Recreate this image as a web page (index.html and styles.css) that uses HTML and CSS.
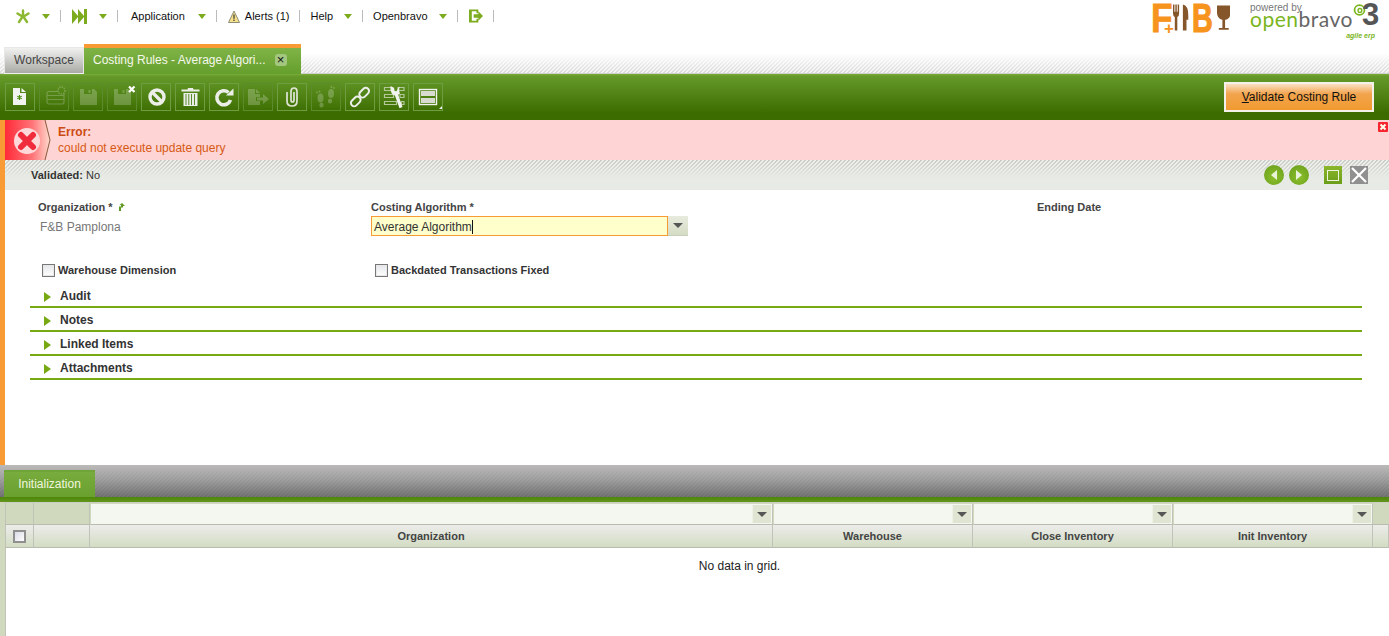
FILE: index.html
```html
<!DOCTYPE html>
<html lang="en">
<head>
<meta charset="utf-8">
<title>Costing Rules</title>
<link rel="stylesheet" href="styles.css">
</head>
<body>
<div class="app">
  <header class="topbar">
    <nav class="nav">
      <div class="nav-group">
        <svg class="ico-star" width="14" height="15" viewBox="0 0 14 15"><g stroke="#8cb832" stroke-width="2.400" stroke-linecap="round"><path d="M7 1.500v5M1.500 4.500l4 2.500M12.500 4.500l-4 2.500M3 13l3-4.500M11 13l-3-4.500"/></g></svg>
        <i class="arrow"></i>
      </div>
      <span class="sep"></span>
      <div class="nav-group nav-ff">
        <svg width="15" height="15" viewBox="0 0 15 15"><path fill="#7cab1e" d="M0 0l6 7V0l6 7V0h3v15h-3V8l-6 7V8l-6 7z"/></svg>
        <i class="arrow"></i>
      </div>
      <span class="sep"></span>
      <div class="nav-group nav-app"><span>Application</span><i class="arrow"></i></div>
      <span class="sep"></span>
      <div class="nav-group nav-alert">
        <svg width="12" height="13" viewBox="0 0 12 13"><path d="M6 1L11.500 12.500H.5z" fill="#f7e08a" stroke="#8d8d78"/><path d="M6 4.500v4.200M6 9.600V11" stroke="#333" stroke-width="1.200"/></svg>
        <span>Alerts (1)</span>
      </div>
      <span class="sep"></span>
      <div class="nav-group nav-text"><span>Help</span><i class="arrow"></i></div>
      <span class="sep"></span>
      <div class="nav-group nav-text"><span>Openbravo</span><i class="arrow"></i></div>
      <span class="sep"></span>
      <div class="nav-group nav-exit">
        <svg width="14" height="14" viewBox="0 0 15 14"><path fill="#7cab1e" d="M0 0h10v4H8V2H3v10h5v-2h2v4H0z"/><path fill="#7cab1e" d="M5 5h5V2l5 5-5 5V9H5z"/></svg>
      </div>
      <span class="sep"></span>
    </nav>
    <div class="brand">
      <div class="fb">
        <span class="fb-f">F</span><span class="fb-plus">+</span>
        <svg class="fb-cutlery" width="18" height="29" viewBox="0 0 18 29"><path fill="#86562b" d="M0 0h1.600v8h1V0h1.600v8h1V0h1.600v10q0 3-2 4v15H2V14q-2-1-2-4zM11 0q6 1 6 12v5h-2v12h-4z"/></svg>
        <span class="fb-b">B</span>
        <svg class="fb-glass" width="15" height="30" viewBox="0 0 15 30"><path fill="#86562b" d="M0 1h15v8q0 7-6 8v9h4v2H2v-2h4v-9q-6-1-6-8z"/></svg>
      </div>
      <div class="ob">
        <span class="ob-powered">powered by</span>
        <span class="ob-word"><b>open</b>bravo</span>
        <svg class="ob-spiral" width="13" height="12" viewBox="0 0 14 14"><circle cx="7" cy="7" r="5.800" fill="none" stroke="#7ab51d" stroke-width="2"/><circle cx="7.500" cy="7.500" r="2.200" fill="none" stroke="#7ab51d" stroke-width="1.600"/></svg>
        <span class="ob-three">3</span>
        <span class="ob-agile">agile erp</span>
      </div>
    </div>
  </header>

  <div class="tabs">
    <div class="tab tab-idle">Workspace</div>
    <div class="tab tab-active">
      <span>Costing Rules - Average Algori...</span>
      <span class="tab-close">×</span>
    </div>
  </div>

  <div class="toolbar">
    <div class="tool">
      <svg viewBox="0 0 28 26"><path fill="#f1f3ee" d="M7 4h7v5h6v12H7z"/><path fill="#f1f3ee" d="M15.500 4l4.500 4h-4.500z"/><path stroke="#4c8a10" stroke-width="1.100" d="M13.500 11v5M11.300 12.200l4.400 2.600M15.700 12.200l-4.400 2.600"/></svg>
    </div>
    <div class="tool tool-off">
      <svg viewBox="0 0 28 26"><g fill="none" stroke="#fff" stroke-width="1.200"><rect x="7" y="7.500" width="17" height="12.500" rx="2"/><path d="M7 11.500h17M7 15.500h17"/></g><circle cx="21.500" cy="6.500" r="3.500" fill="#4f8412" stroke="#fff" stroke-width="1.500" stroke-dasharray="1.500 .8"/></svg>
    </div>
    <div class="tool tool-off">
      <svg viewBox="0 0 28 26"><path fill="#fff" fill-rule="evenodd" d="M6 5h14l3 3v13H6zM10 5v5h8V5zM14.500 6v3h2V6z"/></svg>
    </div>
    <div class="tool tool-mixed">
      <svg viewBox="0 0 28 26"><path class="dim" fill="#fff" fill-rule="evenodd" d="M6 5h14l3 3v13H6zM10 5v5h8V5zM14.500 6v3h2V6z"/><path stroke="#fff" stroke-width="2.200" d="M21 2.500l5.500 5.500M26.500 2.500L21 8"/></svg>
    </div>
    <div class="tool">
      <svg viewBox="0 0 28 26"><circle cx="15" cy="13" r="7" fill="none" stroke="#eceee8" stroke-width="3.400"/><path stroke="#eceee8" stroke-width="3.400" d="M10 8l10 10"/></svg>
    </div>
    <div class="tool">
      <svg viewBox="0 0 28 26"><path fill="#eceee8" d="M5.500 5.500h6l.5-1.500h5l.5 1.500h6v2h-18zM7.500 9h14v13h-14z"/><path stroke="#5b8b2c" stroke-width="1" d="M10 10v11M12.800 10v11M15.500 10v11M18.500 10v11"/></svg>
    </div>
    <div class="tool">
      <svg viewBox="0 0 28 26"><path fill="none" stroke="#eceee8" stroke-width="3.600" d="M20.500 16A7 7 0 1 1 18.500 8.500"/><path fill="#eceee8" d="M16 11.500h7.500v-7z"/></svg>
    </div>
    <div class="tool tool-off">
      <svg viewBox="0 0 28 26"><path fill="#fff" d="M4 5h7v5h5v3h-4v4h4v4H4zM12 5l4 4h-4z"/><path fill="#fff" d="M13 13.500h6V10l6 5-6 5v-3.500h-6z"/></svg>
    </div>
    <div class="tool">
      <svg viewBox="0 0 28 26"><path fill="none" stroke="#dfe5d6" stroke-width="1.700" d="M9 8v9q0 5 5 5t5-5V7.500Q19 4 16 4t-3 3.500V16q0 2 1.500 2t1.500-2V8"/></svg>
    </div>
    <div class="tool tool-off">
      <svg viewBox="0 0 28 26"><g fill="#fff"><ellipse cx="8.500" cy="14" rx="3" ry="4.500"/><ellipse cx="9.500" cy="21" rx="2.200" ry="2.500"/><ellipse cx="19" cy="9.500" rx="3" ry="4.500"/><ellipse cx="18" cy="17" rx="2.200" ry="2.500"/><circle cx="5" cy="8.500" r=".9"/><circle cx="7.500" cy="7.500" r="1"/><circle cx="22" cy="4" r=".9"/><circle cx="19.500" cy="3" r="1"/></g></svg>
    </div>
    <div class="tool">
      <svg viewBox="0 0 28 26"><g fill="none" stroke="#eceee8" stroke-width="2"><rect x="15" y="3" width="6.500" height="11" rx="3.200" transform="rotate(45 18 8.500)"/><rect x="6.500" y="12" width="6.500" height="11" rx="3.200" transform="rotate(45 9.800 17.500)"/></g></svg>
    </div>
    <div class="tool">
      <svg viewBox="0 0 28 26"><g fill="none" stroke="#b3c799" stroke-width="1.200"><path d="M4.500 3.500h7v3h-7zM18 3.500h6v3h-6zM4.500 10.500h9v3h-9zM20 10.500h4v3h-4zM4.500 17.500h12v3h-12zM21.500 17.500h2.500v3h-2.500z"/></g><path fill="#f1f3ee" d="M10.500 2l3.500 1.800.5 3 1.700.4 1-1 1.300-3 1-.5-.4 4 .9 2.800-1.800 1.200L22.500 23l-3 1.300-4.600-12.800-2.900-1.500L10.500 6z"/></svg>
    </div>
    <div class="tool tool-menu">
      <svg viewBox="0 0 28 26"><rect x="5.500" y="5.500" width="17" height="15" fill="none" stroke="#f1f3ee" stroke-width="1.400"/><path fill="#d8dcd0" d="M7 7h14v5H7zM7 14h14v5H7z"/><path fill="#eee" d="M25 25h3v-3z"/></svg>
    </div>
    <button class="validate" type="button"><u>V</u>alidate Costing Rule</button>
  </div>

  <div class="main">
    <div class="message">
      <svg class="msg-icon" width="46" height="40" viewBox="0 0 46 40">
        <defs><linearGradient id="msgRed"><stop offset="0" stop-color="#ff2a38"/><stop offset=".6" stop-color="#ff7478"/><stop offset="1" stop-color="#ffdcd0"/></linearGradient></defs>
        <path fill="url(#msgRed)" d="M0 0h41l4.500 20L41 40H0z"/>
        <path fill="none" stroke="#8a5a40" d="M40 0l5 20-5 20"/>
        <circle cx="22" cy="21" r="13" fill="#ffd9d9"/>
        <path stroke="#f02b3c" stroke-width="6" stroke-linecap="round" d="M16 15l12 12M28 15L16 27"/>
      </svg>
      <div class="msg-text">
        <strong>Error:</strong>
        <span>could not execute update query</span>
      </div>
      <svg class="msg-close" width="10" height="10" viewBox="0 0 10 10"><rect width="10" height="10" rx="1" fill="#f5242f"/><path stroke="#ffe" stroke-width="2" d="M2.500 2.500l5 5M7.500 2.500l-5 5"/></svg>
    </div>
    <div class="status">
      <span class="status-text"><b>Validated:</b> No</span>
      <div class="status-actions">
        <span class="round"><i class="tri-left"></i></span>
        <span class="round"><i class="tri-right"></i></span>
        <span class="square-green"><i></i></span>
        <span class="square-grey"><svg width="18" height="18" viewBox="0 0 18 18"><path stroke="#fff" stroke-width="2.200" d="M2 2l14 14M16 2L2 16"/></svg></span>
      </div>
    </div>
    <form class="form">
      <div class="field">
        <label class="flabel">Organization * <svg width="7" height="8" viewBox="0 0 7 8"><path fill="#5d9a1f" d="M1 8V3.500h2V2L1.500 2 4 0l3 3H5v1.500H3V8z"/></svg></label>
        <div class="fvalue">F&amp;B Pamplona</div>
      </div>
      <div class="field">
        <label class="flabel">Costing Algorithm *</label>
        <div class="combo">
          <div class="combo-input">Average Algorithm<i class="caret"></i></div>
          <div class="combo-btn"><i class="down"></i></div>
        </div>
      </div>
      <div class="field">
        <label class="flabel">Ending Date</label>
      </div>
      <div class="check-row">
        <label class="check"><i class="box"></i>Warehouse Dimension</label>
        <label class="check"><i class="box"></i>Backdated Transactions Fixed</label>
      </div>
    </form>
    <div class="sections">
      <div class="section"><i class="sec-tri"></i>Audit</div>
      <div class="section"><i class="sec-tri"></i>Notes</div>
      <div class="section"><i class="sec-tri"></i>Linked Items</div>
      <div class="section"><i class="sec-tri"></i>Attachments</div>
    </div>
  </div>

  <div class="subtabs"><div class="subtab">Initialization</div></div>
  <div class="subline"></div>

  <div class="grid-wrap">
    <div class="grid">
      <div class="fcell fcell-first"></div>
      <div class="fcell"></div>
      <div class="fcell filter"><span class="fbtn"><i class="down"></i></span></div>
      <div class="fcell filter"><span class="fbtn"><i class="down"></i></span></div>
      <div class="fcell filter"><span class="fbtn"><i class="down"></i></span></div>
      <div class="fcell filter"><span class="fbtn"><i class="down"></i></span></div>
      <div class="fcell fcell-last"></div>
      <div class="hcell hcell-first"><i class="hbox"></i></div>
      <div class="hcell"></div>
      <div class="hcell">Organization</div>
      <div class="hcell">Warehouse</div>
      <div class="hcell">Close Inventory</div>
      <div class="hcell">Init Inventory</div>
      <div class="hcell"></div>
    </div>
    <div class="grid-empty">No data in grid.</div>
  </div>
</div>
</body>
</html>
```
FILE: styles.css
```css
* { box-sizing: border-box; }
html, body { margin: 0; padding: 0; }
body { font-family: "Liberation Sans", Arial, sans-serif; font-size: 11px; color: #222; background: #fff; }
.app { width: 1389px; height: 636px; overflow: hidden; display: flex; flex-direction: column; }

/* top navigation */
.topbar { height: 44px; display: flex; justify-content: space-between; flex: none; }
.nav { display: flex; align-items: center; height: 32px; padding-left: 16px; font-size: 11px; color: #111; }
.nav-group { display: flex; align-items: center; gap: 12px; }
.nav-ff { padding-left: 1px; }
.nav-app { padding-left: 3px; gap: 13px; }
.nav-alert { gap: 5px; padding-left: 1px; }
.nav-text { gap: 11px; }
.nav-exit { padding-left: 1px; }
.sep { width: 1px; height: 12px; background: #bbb; margin: 0 10px; }
.arrow { width: 0; height: 0; border-left: 4px solid transparent; border-right: 4px solid transparent; border-top: 5px solid #7cab1e; }

.brand { display: flex; padding: 0 9px 0 0; gap: 20px; }
.fb { display: flex; align-items: flex-start; width: 79px; height: 36px; position: relative; font-weight: 700; color: #f7941d; font-size: 40px; line-height: 46px; }
.fb-f { margin: -5px -2px 0 0; transform: scaleX(.88); transform-origin: left; -webkit-text-stroke: .8px #f7941d; }
.fb-plus { position: absolute; left: 13px; top: 19px; font-size: 17px; line-height: 20px; }
.fb-cutlery { margin-top: 3px; }
.fb-b { margin: -5px -7px 0 2px; transform: scaleX(.72); transform-origin: left; -webkit-text-stroke: 1.200px #f7941d; }
.fb-glass { margin-top: 3px; margin-left: 3px; }

.ob { display: grid; grid-template-columns: 103px 27px; grid-template-rows: 13px 18px 10px; width: 130px; }
.ob-powered { grid-column: 1; grid-row: 1; padding-top: 3px; font-size: 10px; line-height: 10px; color: #777; }
.ob-word { grid-column: 1; grid-row: 2; font-family: "Lato", sans-serif; font-size: 21px; line-height: 12px; color: #666; letter-spacing: .5px; white-space: nowrap; }
.ob-word b { font-weight: 400; color: #7ab51d; }
.ob-spiral { grid-column: 2; grid-row: 1 / 3; margin-top: 4px; }
.ob-three { grid-column: 2; grid-row: 1 / 3; margin: -3px 0 0 9px; font-size: 31px; line-height: 36px; font-weight: 700; color: #555; }
.ob-agile { grid-column: 1 / 3; grid-row: 3; justify-self: end; margin-right: 5px; font-size: 7px; line-height: 10px; font-style: italic; font-weight: 700; color: #7ab51d; }

/* window tabs */
.tabs { height: 30px; flex: none; display: flex; align-items: flex-end; padding-left: 4px; font-size: 12px;
  background: linear-gradient(#fff 30%, rgba(255,255,255,.15) 96%, #cfd0cc 96%), repeating-linear-gradient(135deg, #d4d4d4 0 1.414px, #f2f2f2 1.414px 2.828px); }
.tab { display: flex; align-items: center; height: 27px; }
.tab-idle { width: 80px; padding-bottom: 2px; justify-content: center; color: #444; background: linear-gradient(#f1f1ef, #a9aaa6); border: 1px solid #e8e8e6; border-bottom-color: #eee; }
.tab-active { width: 217px; height: 30px; padding: 0 0 2px 9px; gap: 9px; color: #f5f8ec; background: linear-gradient(#80b347, #659f2c); border-top: 4px solid #f99b34; }
.tab-close { width: 12px; height: 12px; border-radius: 3px; background: #a4c77f; color: #111; font-size: 13px; line-height: 11px; text-align: center; }

/* toolbar */
.toolbar { height: 46px; flex: none; display: flex; align-items: flex-start; gap: 4px; padding: 9px 15px 0 5px; background: linear-gradient(#7bad3b 0, #659a2a 2px, #3c6c00 85%, #3c6b00); }
.tool { width: 30px; height: 28px; flex: none; border: 1px solid #6f9e42; }
.tool svg { display: block; width: 28px; height: 26px; }
.tool-off { border-color: #5b8c2c; }
.tool-off svg { opacity: .22; }
.tool-mixed { border-color: #5b8c2c; }
.tool-mixed .dim { opacity: .22; }
.validate { margin: -1px 0 0 auto; width: 150px; height: 30px; padding: 0; font: 12px "Liberation Sans", Arial, sans-serif; color: #111; border: 2px solid #f3f1ea; background: linear-gradient(#fbe0c4 0, #f2a44d 38%, #f19a30 100%); }

/* main window */
.main { flex: none; height: 345px; border-left: 5px solid #f99b34; }
.message { height: 40px; display: flex; background: #ffd4d4; }
.msg-icon { flex: none; }
.msg-text { display: flex; flex-direction: column; padding: 4px 0 0 7px; font-size: 12px; line-height: 16px; color: #d65a15; }
.msg-text strong { color: #cc4b12; }
.msg-close { margin: 2px 1px 0 auto; }
.status { height: 30px; display: flex; align-items: center; justify-content: space-between; padding: 0 21px 0 26px; background: linear-gradient(rgba(232,235,229,0) 0, #e8ebe5 60%), repeating-linear-gradient(135deg, #c9cbc6 0 1.414px, #eff0ec 1.414px 2.828px); }
.status-text { color: #333; }
.status-text b { color: #333; }
.status-actions { display: flex; align-items: center; }
.round { width: 20px; height: 20px; border-radius: 50%; margin-left: 5px; display: flex; align-items: center; justify-content: center; background: radial-gradient(circle at 50% 60%, #8cc02c, #72a61f 70%, #c3d1a6 100%); }
.tri-left, .tri-right { width: 0; height: 0; border-top: 5px solid transparent; border-bottom: 5px solid transparent; }
.tri-left { border-right: 6px solid #e9f3d7; }
.tri-right { border-left: 6px solid #e9f3d7; }
.square-green { width: 18px; height: 18px; margin-left: 15px; display: flex; align-items: center; justify-content: center; background: linear-gradient(#8bb62d, #6b9d19); }
.square-green i { width: 12px; height: 11px; border: 1px solid #eef5dc; }
.square-grey { width: 18px; height: 18px; margin-left: 8px; background: #909090; }
.square-grey svg { display: block; }

.form { display: grid; grid-template-columns: 333px 666px 1fr; padding: 11px 0 0 33px; height: 94px; align-content: start; }
.field { height: 46px; }
.flabel { display: block; height: 15px; font-weight: 700; color: #444; line-height: 13px; }
.flabel svg { margin-left: 2px; }
.fvalue { padding: 3px 0 0 2px; font-size: 12px; color: #777; line-height: 16px; }
.combo { display: flex; width: 317px; height: 20px; }
.combo-input { width: 297px; border: 1px solid #f99b34; background: #ffc; padding-left: 2px; font-size: 12px; line-height: 20px; color: #333; }
.caret { display: inline-block; width: 1px; height: 14px; background: #111; vertical-align: -3px; }
.combo-btn { width: 20px; display: flex; align-items: center; justify-content: center; background: linear-gradient(#e7ebde, #d5dcc4); border-bottom: 1px solid #c8cfb8; }
.down { width: 0; height: 0; border-left: 5px solid transparent; border-right: 5px solid transparent; border-top: 5px solid #555; }
.check-row { grid-column: 1 / 4; display: grid; grid-template-columns: 333px 1fr; padding-left: 4px; margin-top: 16px; }
.check { display: flex; align-items: center; gap: 3px; font-weight: 700; color: #333; height: 14px; }
.box { width: 13px; height: 13px; border: 1px solid #777; outline: 1px solid #e8e8e8; outline-offset: -2px; background: linear-gradient(#e4e6ea, #fff); }

.sections { padding: 0 27px 0 25px; }
.section { height: 24px; display: flex; align-items: center; padding: 2px 0 0 14px; font-size: 12px; font-weight: 700; color: #333; border-bottom: 2px solid #76a912; }
.sec-tri { width: 0; height: 0; margin-right: 9px; margin-top: 1px; border-top: 5px solid transparent; border-bottom: 5px solid transparent; border-left: 7px solid #76a912; }

/* sub tabs */
.subtabs { height: 32px; flex: none; padding: 5px 0 0 4px; background: linear-gradient(rgba(187,186,185,1) 0, rgba(160,160,160,.9) 45%, rgba(110,110,110,.9) 100%), repeating-linear-gradient(135deg, #666 0 1.414px, #aaa 1.414px 2.828px); }
.subtab { width: 91px; height: 27px; font-size: 12px; line-height: 24px; text-align: center; color: #f0f6de; background: linear-gradient(#78ac3e, #69a02e); border-top: 2px solid #6fa536; }
.subline { height: 5px; flex: none; background: linear-gradient(#4d8608, #62961c); }

/* grid */
.grid-wrap { flex: 1; border-top: 1px solid #c9cdc2; border-left: 5px solid #d0d9bd; box-shadow: inset 1px 0 #bfc3b8; }
.grid { display: grid; grid-template-columns: 29px 56px 683px 200px 200px 200px 16px; grid-template-rows: 22px 23px; width: 1384px; }
.fcell { background: #d0d9bd; border-right: 1px solid #bfc3b8; border-bottom: 1px solid #b8bbb0; }
.fcell-first, .hcell-first { border-left: 1px solid #bfc3b8; }
.fcell-last { border-right: 0; }
.filter { background: #f4f7ef; border: 1px solid #d0d9bd; border-bottom: 1px solid #b8bbb0; border-right-color: #bfc3b8; display: flex; justify-content: flex-end; align-items: center; padding-right: 1px; }
.fbtn { width: 19px; height: 18px; display: flex; align-items: center; justify-content: center; background: #dfe4d3; border-left: 1px solid #eef1e6; }
.hcell { display: flex; align-items: center; justify-content: center; font-weight: 700; color: #444; background: linear-gradient(#ececea, #d3dcc3); border-right: 1px solid #bfc3b8; border-bottom: 1px solid #b8bbb0; }
.hbox { width: 13px; height: 13px; border: 2px solid #8f8f8f; background: linear-gradient(135deg, #d9dbe5, #fff); }
.grid-empty { height: 36px; line-height: 37px; padding-left: 85px; text-align: center; font-size: 12px; color: #222; }
```
